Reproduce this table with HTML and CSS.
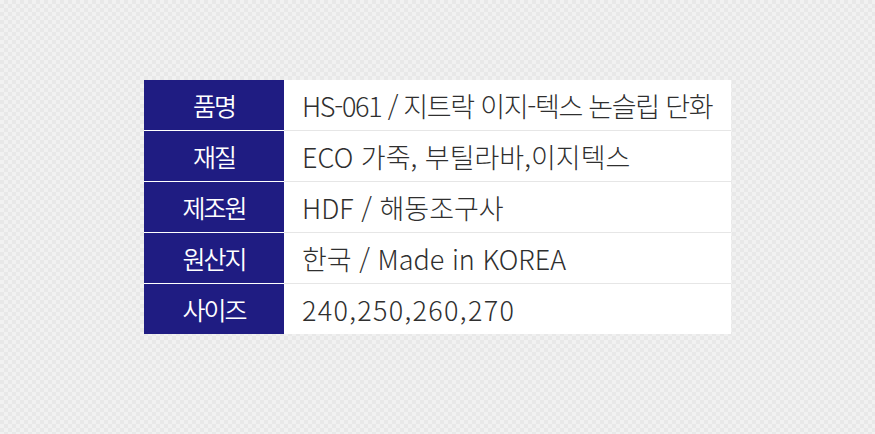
FILE: index.html
```html
<!DOCTYPE html>
<html lang="ko">
<head>
    <meta charset="UTF-8">
    <meta name="viewport" content="width=device-width, initial-scale=1.0">
    <title>상품 정보</title>
    <link rel="stylesheet" href="styles.css">
</head>
<body>
    <div class="info-table">
        <div class="info-row">
            <div class="info-label">품명</div>
            <div class="info-value tight">HS-061 / 지트락 이지-텍스 논슬립 단화</div>
        </div>
        <div class="info-row">
            <div class="info-label">재질</div>
            <div class="info-value">ECO 가죽, 부틸라바,이지텍스</div>
        </div>
        <div class="info-row">
            <div class="info-label">제조원</div>
            <div class="info-value">HDF / 해동조구사</div>
        </div>
        <div class="info-row">
            <div class="info-label">원산지</div>
            <div class="info-value">한국 / Made in KOREA</div>
        </div>
        <div class="info-row">
            <div class="info-label">사이즈</div>
            <div class="info-value wide">240,250,260,270</div>
        </div>
    </div>
</body>
</html>
```

FILE: styles.css
```css
:root {
    --navy: #1f1c82;
    --text: #2f2f2f;
    --line: #e6e6e6;
}

html, body {
    height: 100%;
}

body {
    margin: 0;
    background-color: #ededed;
    background-image:
        conic-gradient(#e8e8e8 25%, #f1f1f1 0 50%, #e8e8e8 0 75%, #f1f1f1 0);
    background-size: 8px 8px;
    font-family: "Noto Sans CJK KR", "Noto Sans", sans-serif;
    display: flex;
    justify-content: center;
    align-items: flex-start;
    padding-top: 80px;
    box-sizing: border-box;
}

.info-table {
    width: 587px;
    display: flex;
    flex-direction: column;
}

.info-row {
    display: flex;
    height: 50px;
}

.info-row + .info-row {
    border-top: 1px solid var(--line);
}

.info-row + .info-row .info-label {
    box-shadow: 0 -1px 0 #ffffff;
}

.info-label {
    width: 140px;
    background: var(--navy);
    color: #ffffff;
    font-size: 25px;
    font-weight: 350;
    letter-spacing: -2px;
    display: flex;
    align-items: center;
    justify-content: center;
}

.info-value {
    flex: 1;
    background: #ffffff;
    color: var(--text);
    font-size: 27px;
    font-weight: 300;
    display: flex;
    align-items: center;
    padding-left: 18px;
}

.info-value.tight {
    letter-spacing: -1.3px;
}

.info-value.wide {
    letter-spacing: 1.3px;
}
```
